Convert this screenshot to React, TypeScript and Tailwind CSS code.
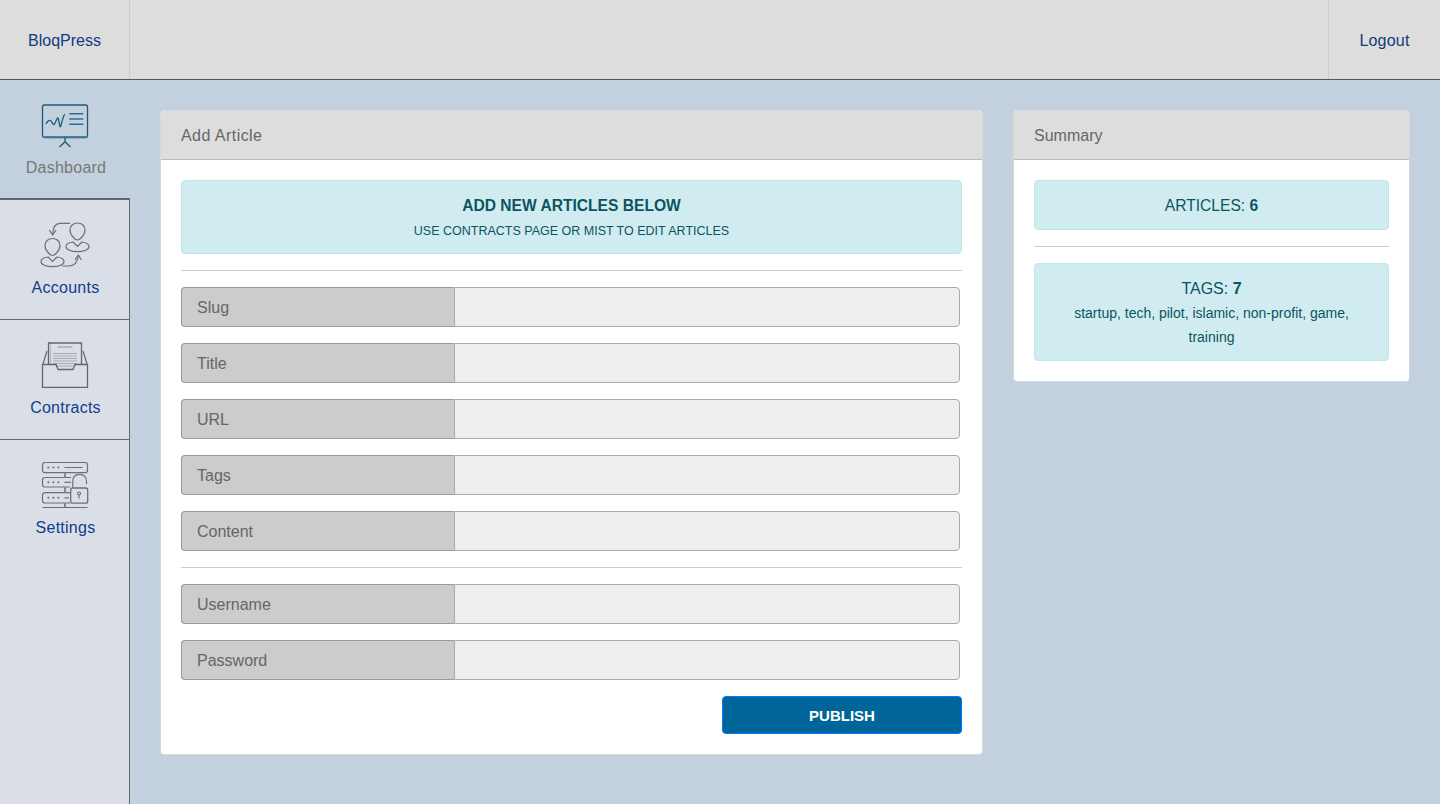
const DashboardIcon = () => (
  <svg width="50" height="46" viewBox="0 0 50 46" fill="none" stroke="#1d5a78" strokeWidth="1.3">
    <rect x="2.5" y="3" width="45" height="32.5" rx="2" />
    <path d="M2.5 34.8H47.5" strokeWidth="1.8" stroke="#4d7f99" />
    <path d="M6 22C7.5 19 9 18 10.5 18.5C12 19 12.5 23 14 22.5C15.5 21.5 17 15.5 18 16C19 17 19.5 25.5 20.5 24.7C22 21 23 13 25 12.3" />
    <path d="M29.3 11.7H43.3M29.3 17H43.3M29.3 22.3H43.3" strokeWidth="1.5" stroke="#2f6d8c" />
    <path d="M25 35.5V40M19.5 45L25 39.7L30.5 45" />
  </svg>
);

const head = "M37.5 1C33 1 30 4 30 8C30 11.5 32 14 33.5 15.5C35 17.3 36.3 18 37.5 18C38.7 18 40 17.3 41.5 15.5C43 14 45 11.5 45 8C45 4 42 1 37.5 1Z";
const shoulders = "M33 20C28.5 20.5 26 22.5 26 24.7C26 27.5 31 29.7 37.5 29.7C44 29.7 49 27.5 49 24.7C49 22.5 46.5 20.5 42 20L37.5 24.5Z";

const AccountsIcon = () => (
  <svg width="50" height="46" viewBox="0 0 50 46" fill="none" stroke="#6f6f6f" strokeWidth="1.2">
    <path d={head} />
    <path d={shoulders} />
    <path d={head} transform="translate(-25 15.5)" />
    <path d={shoulders} transform="translate(-25 15)" />
    <path d="M30 1.3H20C16 1.3 13 4 12.7 12.5" />
    <path d="M9.3 8L12.7 13L16 8" />
    <path d="M22.3 44H29C34 44 37.5 41 38.3 33.5" />
    <path d="M35 38L38.3 33L41.5 38" />
  </svg>
);

const ContractsIcon = () => (
  <svg width="50" height="46" viewBox="0 0 50 46" fill="none" stroke="#666" strokeWidth="1.2">
    <path d="M8.5 22V1H41.5V22" strokeWidth="1.3" />
    <path d="M7 9L3 22M43 9L47 22" />
    <path d="M10.5 22V3" stroke="#bbb" />
    <path d="M17.5 5H32.5" stroke="#b5b8bd" strokeWidth="2" />
    <path d="M13 11.5H37M13 14H37M13 16.5H37M13 19H37M13 21.5H37M17 24H33" stroke="#a7abb2" strokeWidth="1" />
    <path d="M2.5 22.5H16L18 27.5H33L35 22.5H47.5V45.5H2.5Z" fill="#dadfe7" strokeWidth="1.3" />
  </svg>
);

const SettingsIcon = () => (
  <svg width="50" height="46" viewBox="0 0 50 46" fill="none" stroke="#6f6f6f" strokeWidth="1.2">
    <rect x="2.5" y="0.5" width="45" height="10.2" rx="2.5" />
    <path d="M31 15.5H5C3.5 15.5 2.5 16.5 2.5 18V22.5C2.5 24 3.5 25 5 25H30" />
    <path d="M30 30.7H5C3.5 30.7 2.5 31.7 2.5 33.2V38.5C2.5 40 3.5 41 5 41H30" />
    <path d="M25 10.7V15.5M25 25V30.7M25 41V45.5" strokeWidth="2" stroke="#888" />
    <path d="M2.5 45.5H47.5" strokeWidth="1.2" />
    <path d="M8.3 5.5h.1M13.3 5.5h.1M18.3 5.5h.1M8.3 20.3h.1M13.3 20.3h.1M18.3 20.3h.1M8.3 35.8h.1M13.3 35.8h.1M18.3 35.8h.1" strokeWidth="2" strokeLinecap="round" />
    <path d="M24.5 5.5H42.5M24.5 20.3H31M24.5 35.8H29" />
    <rect x="30.7" y="26" width="17" height="15.2" rx="2" strokeWidth="1.3" />
    <path d="M32.8 26V19.5C32.8 15 35.5 12.3 39.5 12.3C43.5 12.3 46.5 15 46.5 19.5V22" />
    <circle cx="39" cy="31.5" r="1.5" />
    <path d="M39 33V36.5" />
  </svg>
);

const navItems = [
  { label: "Accounts", icon: <AccountsIcon /> },
  { label: "Contracts", icon: <ContractsIcon /> },
];

const NavItem = ({ label, icon, className }: { label: string; icon: React.ReactNode; className: string }) => (
  <a className={`flex flex-col items-center pt-[22px] ${className}`}>
    {icon}
    <span className="mt-2 pl-[2px] text-base leading-6 tracking-[0.25px]">{label}</span>
  </a>
);

const fieldGroups = [
  ["Slug", "Title", "URL", "Tags", "Content"],
  ["Username", "Password"],
];

const Field = ({ label }: { label: string }) => (
  <div className="mr-[2px] flex h-10">
    <span className="flex w-[273px] items-center rounded-l border border-r-0 border-[#999] bg-[#ccc] px-[15px] pt-[2px] text-base text-[#666]">
      {label}
    </span>
    <input className="min-w-0 flex-1 rounded-r border border-[#aaa] bg-[#eee] px-3 outline-none" />
  </div>
);

const Card = ({
  title,
  className,
  titleClassName,
  children,
}: {
  title: string;
  className: string;
  titleClassName?: string;
  children: React.ReactNode;
}) => (
  <section className={`rounded border border-[#d5d8dc] bg-white ${className}`}>
    <h2 className="flex h-[49px] items-center rounded-t border-b border-[#bbb] bg-[#ddd] px-5 pt-[2px] text-base font-normal text-[#666]">
      <span className={titleClassName}>{title}</span>
    </h2>
    <div className="p-5">{children}</div>
  </section>
);

const Alert = ({ className, children }: { className: string; children: React.ReactNode }) => (
  <div className={`rounded border border-[#bee5eb] bg-[#d1ecf1] text-center text-[#0c5460] ${className}`}>
    {children}
  </div>
);

export default function App() {
  return (
    <div className="flex min-h-[804px] flex-col bg-[#c3d0de] font-['Liberation_Sans',Arial,sans-serif]">
      <header className="flex h-20 border-b border-[#555] bg-[#ddd] text-base text-[#123a80]">
        <a className="flex w-[130px] items-center justify-center border-r border-[#ccc] pt-[2px]">BloqPress</a>
        <div className="flex-1" />
        <a className="flex w-[112px] items-center justify-center border-l border-[#ccc] pt-[2px] tracking-[0.2px]">
          Logout
        </a>
      </header>

      <div className="flex flex-1">
        <aside className="flex w-[130px] flex-col">
          <NavItem
            label="Dashboard"
            icon={<DashboardIcon />}
            className="h-[120px] border-b-2 border-[#666] text-[#777]"
          />
          {navItems.map((item) => (
            <NavItem
              key={item.label}
              label={item.label}
              icon={item.icon}
              className="h-[120px] border-r border-b border-[#666] bg-[#dadfe7] text-[#0f3d8c]"
            />
          ))}
          <NavItem
            label="Settings"
            icon={<SettingsIcon />}
            className="flex-1 border-r border-[#666] bg-[#dadfe7] text-[#0f3d8c]"
          />
        </aside>

        <main className="flex flex-1 items-start gap-[30px] p-[30px]">
          <Card title="Add Article" titleClassName="tracking-[0.45px]" className="w-[823px]">
            <Alert className="flex h-[74px] flex-col items-center pt-[13px]">
              <strong className="text-[15.6px] leading-6">ADD NEW ARTICLES BELOW</strong>
              <p className="mt-1 text-[12.5px] leading-[18px]">USE CONTRACTS PAGE OR MIST TO EDIT ARTICLES</p>
            </Alert>
            {fieldGroups.map((fields) => (
              <div key={fields[0]}>
                <hr className="my-4 border-[#ccc]" />
                <div className="flex flex-col gap-4">
                  {fields.map((field) => (
                    <Field key={field} label={field} />
                  ))}
                </div>
              </div>
            ))}
            <div className="mt-4 flex justify-end">
              <button className="h-[38px] w-[240px] rounded border border-[#007bff] bg-[#006699] pt-[2px] text-[15px] font-bold text-white">
                PUBLISH
              </button>
            </div>
          </Card>

          <Card title="Summary" className="w-[397px]">
            <Alert className="flex h-[50px] items-center justify-center pt-[2px] text-[15.6px]">
              <span>
                ARTICLES: <strong>6</strong>
              </span>
            </Alert>
            <hr className="my-4 border-[#ccc]" />
            <Alert className="h-[98px] px-[25px] pt-[13px] text-base">
              <p className="leading-6">
                TAGS: <strong>7</strong>
              </p>
              <p className="text-sm leading-6">startup, tech, pilot, islamic, non-profit, game, training</p>
            </Alert>
          </Card>
        </main>
      </div>
    </div>
  );
}
